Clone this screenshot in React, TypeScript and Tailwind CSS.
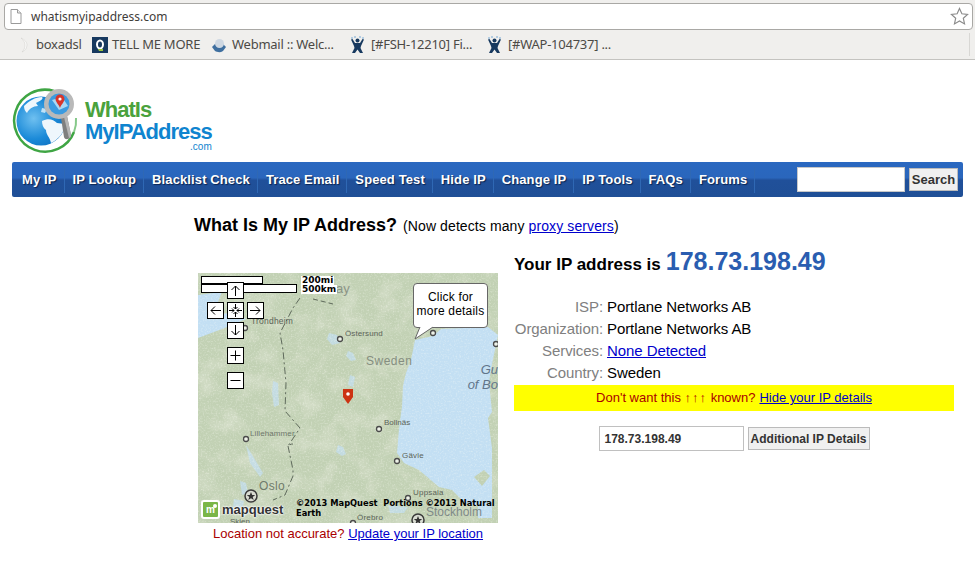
const navItems = ['My IP', 'IP Lookup', 'Blacklist Check', 'Trace Email', 'Speed Test', 'Hide IP', 'Change IP', 'IP Tools', 'FAQs', 'Forums']

const details = [
  { label: 'ISP:', value: 'Portlane Networks AB' },
  { label: 'Organization:', value: 'Portlane Networks AB' },
  { label: 'Services:', value: 'None Detected', link: true },
  { label: 'Country:', value: 'Sweden' },
]

const arial = { fontFamily: '"Liberation Sans", Arial, sans-serif' }
const noto = { fontFamily: '"Noto Sans", "Open Sans", sans-serif' }
const dejavu = { fontFamily: '"DejaVu Sans", sans-serif' }

function PageIcon() {
  return (
    <svg width="12" height="15" viewBox="0 0 12 15">
      <path d="M1 .5h6.5L11 4v10.5H1z" fill="#fff" stroke="#9a9a9a" />
      <path d="M7.5.5V4H11" fill="#eee" stroke="#9a9a9a" />
    </svg>
  )
}

function StarIcon() {
  return (
    <svg width="19" height="19" viewBox="0 0 20 20">
      <path d="M10 1.5l2.5 5.6 6 .6-4.5 4.1 1.3 6L10 14.7l-5.300 3.100 1.300-6L1.500 7.700l6-.6z" fill="#fff" stroke="#8a8a8a" strokeWidth="1.2" />
    </svg>
  )
}

function JiraIcon() {
  return (
    <svg width="15" height="18" viewBox="0 0 15 18">
      <g fill="#9fc0dc">
        <circle cx="2" cy="2" r="1" />
        <circle cx="5" cy="1" r="1" />
        <circle cx="10" cy="1" r="1" />
        <circle cx="13" cy="2" r="1" />
      </g>
      <circle cx="7.5" cy="4.5" r="2" fill="#17395f" />
      <path d="M1 3.500l1.500-.5L5 7h5l2.500-4 1.500.5L11 10l-.5 2 2.500 5h-3L7.500 13.500 5 17H2l2.500-5L4 10z" fill="#17395f" />
    </svg>
  )
}

function BookmarkItem({ width, gap, icon, label }: { width: string; gap: string; icon: React.ReactNode; label: string }) {
  return (
    <span className={`flex items-center whitespace-nowrap ${width}`}>
      <span className={`flex ${gap}`}>{icon}</span>
      <span>{label}</span>
    </span>
  )
}

function Bookmarks() {
  return (
    <div className="flex h-[29px] items-center pl-[15px] text-[13px] tracking-[-0.25px] text-[#4c4a46]" style={noto}>
      <BookmarkItem
        width="w-[77px]"
        gap="mr-[5px]"
        label="boxadsl"
        icon={
          <svg width="16" height="16" viewBox="0 0 16 16">
            <path d="M6 1c2 2 4 4 4 7s-1 5-3 7c3-1 5-4 5-7s-3-6-6-7z" fill="#fbfbfa" stroke="#cfcdc9" strokeWidth=".5" />
          </svg>
        }
      />
      <BookmarkItem
        width="w-[119px]"
        gap="mr-[4px]"
        label="TELL ME MORE"
        icon={
          <svg width="16" height="16" viewBox="0 0 16 16">
            <rect width="16" height="16" fill="#17395f" />
            <ellipse cx="8" cy="7.5" rx="3" ry="4" fill="none" stroke="#fff" strokeWidth="2" />
            <path d="M6 12h5v2H7z" fill="#9cc53d" />
          </svg>
        }
      />
      <BookmarkItem
        width="w-[139px]"
        gap="mr-[5px]"
        label="Webmail :: Welc..."
        icon={
          <svg width="16" height="16" viewBox="0 0 16 16">
            <path d="M8 3l7 7-3 4c-3 2-6 1-8 0L1 10z" fill="#3f6f9f" />
            <circle cx="8.5" cy="6.5" r="4.5" fill="#cfd8e2" />
          </svg>
        }
      />
      <BookmarkItem width="w-[137px]" gap="mr-[6px]" label="[#FSH-12210] Fi..." icon={<JiraIcon />} />
      <BookmarkItem width="w-[130px]" gap="mr-[6px]" label="[#WAP-104737] ..." icon={<JiraIcon />} />
    </div>
  )
}

function BrowserChrome() {
  return (
    <div className="h-[60px] border-b border-[#c4c3c0] bg-[#f0efed] pt-[3px]">
      <div className="ml-[4px] mr-[2px] flex h-[27px] items-center rounded-[4px] border border-[#a9a8a5] bg-white pl-[5px] pr-[3px]">
        <PageIcon />
        <span className="ml-[9px] flex-1 text-[12px] text-[#3f3d3a]" style={noto}>
          whatismyipaddress.com
        </span>
        <StarIcon />
      </div>
      <div className="flex">
        <div className="flex-1">
          <Bookmarks />
        </div>
        <div className="mr-[5px] mt-[3px] h-[23px] w-px bg-[#d8d7d4]" />
      </div>
    </div>
  )
}

function Logo() {
  return (
    <div className="flex h-[72px] items-start">
      <svg width="68" height="68" viewBox="0 0 68 68">
        <defs>
          <radialGradient id="globeFill" cx="35%" cy="45%" r="70%">
            <stop offset="0%" stopColor="#6fc0f0" />
            <stop offset="60%" stopColor="#1b8ad8" />
            <stop offset="100%" stopColor="#0e6fc0" />
          </radialGradient>
        </defs>
        <path d="M42 3A31 31 0 1 0 62 44" fill="none" stroke="#3fa544" strokeWidth="2.5" />
        <path d="M62 44A31 31 0 0 0 64 30" fill="none" stroke="#86c98a" strokeWidth="2" />
        <circle cx="29" cy="33" r="24.5" fill="url(#globeFill)" />
        <path d="M12 18c5-5 11-9 18-9 2 2-2 4-6 6l2 3c-5 0-9 3-11 7-2-2-3-4-3-7zM30 33c6-3 11-2 15 2l8 1c-1 9-6 15-14 19-1-6-5-8-5-13-3-2-4-6-4-9z" fill="#eef6fc" />
        <path d="M30 20l5 1-2 4-4-1z" fill="#bfe2f8" />
        <path d="M49 30l6-2 4 19c.5 4-6 6-7 2z" fill="#7f7f7f" />
        <path d="M52 29l3-1 4 19c.2 2-1 3-2 3z" fill="#b5b5b5" />
        <circle cx="47" cy="16" r="15" fill="#b9b9b9" />
        <circle cx="47" cy="16" r="10.5" fill="#3b9be0" />
        <path d="M40 12l10-3 6 9-9 4z" fill="#a9d8f4" />
        <path d="M43.5 11a4.5 4.5 0 0 1 9 0c0 3-3 5-4.5 9-1.500-4-4.500-6-4.500-9z" fill="#d8352a" />
        <circle cx="48" cy="11" r="1.6" fill="#fff" />
      </svg>
      <div className="ml-[5px] mt-[10px] font-bold tracking-[-1px]" style={arial}>
        <div className="text-[22px] leading-[23px] text-[#4aa23d]">WhatIs</div>
        <div className="text-[22px] leading-[22px] text-[#0f84cf]">MyIPAddress</div>
        <div className="-mt-[1px] text-right text-[10px] font-normal leading-[10px] tracking-normal text-[#0f84cf]">.com</div>
      </div>
    </div>
  )
}

function NavBar() {
  return (
    <div className="flex h-[35px] items-center rounded-[2px] bg-[linear-gradient(#2a68c0_0%,#2a66bc_45%,#20509a_52%,#1f4f96_100%)] pl-[2px] pr-[4px]">
      {navItems.map((item) => (
        <span
          key={item}
          className="border-r border-[#2f68b4] pl-[8px] pr-[7px] text-[13px] font-bold leading-[26px] tracking-[0.11px] text-white [text-shadow:1px_1px_1px_#0b2450]"
        >
          {item}
        </span>
      ))}
      <div className="ml-auto flex items-center gap-[4px] pr-px">
        <div className="h-[25px] w-[108px] border border-[#c8c8c8] bg-white" />
        <button className="h-[23px] w-[49px] border border-[#bbb] bg-[#f0f0f0] text-[13px] font-bold text-[#333]">Search</button>
      </div>
    </div>
  )
}

function ZoomControl({ d, className }: { d: string; className: string }) {
  return (
    <div className={`absolute h-[17px] w-[17px] border border-black bg-white ${className}`}>
      <svg width="15" height="15" viewBox="0 0 15 15" className="block">
        <path d={d} fill="none" stroke="#000" strokeWidth="1" />
      </svg>
    </div>
  )
}

function MapArt() {
  return (
    <svg width="300" height="250" viewBox="0 0 300 250" className="block">
      <defs>
        <filter id="speckle" x="0" y="0" width="100%" height="100%">
          <feTurbulence type="fractalNoise" baseFrequency="0.6" numOctaves="2" seed="7" />
          <feColorMatrix values="0 0 0 0 1  0 0 0 0 1  0 0 0 0 0.95  0 0 0 2 -0.95" />
        </filter>
        <filter id="patches" x="0" y="0" width="100%" height="100%">
          <feTurbulence type="fractalNoise" baseFrequency="0.05" numOctaves="3" seed="12" />
          <feColorMatrix values="0 0 0 0 0.85  0 0 0 0 0.87  0 0 0 0 0.78  0 0 0 1.6 -0.7" />
        </filter>
      </defs>
      <rect width="300" height="250" fill="#c2d1b4" />
      <rect width="300" height="250" filter="url(#patches)" opacity=".55" />
      {/* Norwegian sea */}
      <path d="M0 22l24-3-10 24 22-4 12 7-24 10L0 65z" fill="#c3dff3" />
      {/* Gulf of Bothnia */}
      <path d="M300 62l-10-8-47 2-8 7-18 4-4 20-5 13-3 13-1 20-3 23-2 24 7 10 15 7 20 17 13 3 13 13 13 3v12h14v-70l-4-30 4-6-3-30 3-18z" fill="#c3dff3" />
      <path d="M276 204l10-7 6 6-8 10z" fill="#c2d1b4" />
      {/* lakes */}
      <g fill="#c3dff3" opacity=".7">
        <path d="M131 60l8 2 3 8-8 2-5-6z" />
        <path d="M150 78l5 2 3 7-5 1-5-5z" />
        <path d="M152 102l5 2-2 10-5-2z" />
        <path d="M140 172l5 2 3 7-4 2-6-4z" />
        <path d="M75 108l5 2 1 22-5 2-2-14z" />
        <path d="M48 172l5 8 12 20-3 4-10-14z" />
        <path d="M42 208l6 2 2 10-6 2z" />
        <path d="M36 226l10 2-2 10-10 2z" />
        <path d="M190 232l20 2-4 6h-14z" />
      </g>
      <rect width="300" height="250" filter="url(#speckle)" opacity=".4" />
      {/* border */}
      <path d="M102 25L95 35 82 60l3 17 3 33-1 28 15 17-12 18c2-2 4-2 5-2m-5 2l5 24v6l-8 19-12 5" fill="none" stroke="#5f6a5c" strokeWidth="1" strokeDasharray="7 3 2 3" />
      <path d="M115 26l20 5" fill="none" stroke="#5f6a5c" strokeWidth="1" strokeDasharray="5 3" />
      <g fill="#eef2e8" stroke="#4a4a4a" strokeWidth="1.3">
        <circle cx="142" cy="66" r="2.5" />
        <circle cx="47" cy="55" r="2.5" />
        <circle cx="181" cy="156" r="2.5" />
        <circle cx="48" cy="166" r="2.5" />
        <circle cx="199" cy="188" r="2.5" />
        <circle cx="235" cy="60" r="2.5" />
        <circle cx="298" cy="71" r="2.5" />
        <circle cx="210" cy="225" r="2.5" />
        <circle cx="155" cy="250" r="2.5" />
      </g>
      <g fill="#d9dcd2" stroke="#3a3a3a" strokeWidth="1.5">
        <circle cx="53" cy="223" r="6" />
        <circle cx="220" cy="247" r="6" />
      </g>
      <path d="M53 219l1.200 3h3l-2.500 2 1 3-2.700-1.800-2.700 1.800 1-3-2.500-2h3zM220 243l1.200 3h3l-2.500 2 1 3-2.700-1.800-2.700 1.800 1-3-2.500-2h3z" fill="#333" />
      <path d="M145 116h10v8l-5 7-5-7z" fill="#cc3312" />
      <circle cx="150" cy="121" r="1.8" fill="#fff" />
    </svg>
  )
}

function LandscapeMap() {
  return (
    <div className="relative h-[250px] w-[300px] overflow-hidden whitespace-nowrap" style={arial}>
      <MapArt />
      <span className="absolute left-[138px] top-[8px] text-[13px] leading-[15px] text-[#8b9486]">ay</span>
      <span className="absolute left-[53px] top-[42px] text-[8.5px] tracking-[0.2px] text-[#5b6358]">Trondheim</span>
      <span className="absolute left-[147px] top-[55px] text-[8px] tracking-[0.1px] text-[#5b6358]">Östersund</span>
      <span className="absolute left-[168px] top-[79px] text-[12px] tracking-[0.5px] text-[#858e80]">Sweden</span>
      <span className="absolute right-0 top-[89px] text-[13px] italic leading-[15px] text-[#61758a]">Gu</span>
      <span className="absolute right-0 top-[104px] text-[13px] italic leading-[15px] text-[#61758a]">of Bo</span>
      <span className="absolute left-[186px] top-[144px] text-[8px] text-[#5b6358]">Bollnäs</span>
      <span className="absolute left-[52px] top-[155px] text-[8px] tracking-[0.1px] text-[#6f776b]">Lillehammer</span>
      <span className="absolute left-[204px] top-[177px] text-[8px] tracking-[0.2px] text-[#5b6358]">Gävle</span>
      <span className="absolute left-[61px] top-[204px] text-[12px] tracking-[0.3px] text-[#6f7a6a]">Oslo</span>
      <span className="absolute left-[215px] top-[214px] text-[8px] tracking-[0.2px] text-[#5b6358]">Uppsala</span>
      <span className="absolute left-[228px] top-[230px] text-[12px] text-[#7f8a88]">Stockholm</span>
      <span className="absolute left-[159px] top-[239px] text-[8px] tracking-[0.2px] text-[#5b6358]">Örebro</span>
      <span className="absolute left-[32px] top-[243px] text-[8px] text-[#5b6358]">Skien</span>

      {/* scale bars */}
      <div className="absolute left-[3px] top-[3px] h-[8px] w-[62px] border border-black bg-white" />
      <div className="absolute left-[3px] top-[11px] h-[9px] w-[96px] border border-black bg-white" />
      <span className="absolute left-[103px] top-[3px] bg-white px-px text-[9px] font-bold leading-[9px] text-black" style={dejavu}>200mi</span>
      <span className="absolute left-[103px] top-[12px] bg-white px-px text-[9px] font-bold leading-[9px] text-black" style={dejavu}>500km</span>

      {/* pan and zoom */}
      <ZoomControl className="left-[29px] top-[9px]" d="M7.5 13V3M3.5 7l4-4 4 4" />
      <ZoomControl className="left-[9px] top-[29px]" d="M13 7.5H3M7 3.5l-4 4 4 4" />
      <ZoomControl className="left-[29px] top-[29px]" d="M7.5 1v5M5.5 4l2 2 2-2M7.5 14V9M5.5 11l2-2 2 2M1 7.5h5M4 5.5l2 2-2 2M14 7.5H9M11 5.5l-2 2 2 2" />
      <ZoomControl className="left-[49px] top-[29px]" d="M2 7.5h10M8 3.5l4 4-4 4" />
      <ZoomControl className="left-[29px] top-[49px]" d="M7.5 2v10M3.5 8l4 4 4-4" />
      <ZoomControl className="left-[29px] top-[74px]" d="M7.5 2.5v10M2.5 7.5h10" />
      <ZoomControl className="left-[29px] top-[99px]" d="M2.5 7.5h10" />

      {/* callout */}
      <div className="absolute left-[215px] top-[10px] h-[45px] w-[75px] rounded-[4px] border border-[#666] bg-white text-center text-[12px] leading-[14px] tracking-[0.2px] text-black">
        <div className="pt-[6px]">Click for</div>
        <div>more details</div>
      </div>
      <svg width="20" height="14" viewBox="0 0 20 14" className="absolute left-[216px] top-[53px]">
        <path d="M6 1L1 13 19 1" fill="#fff" stroke="#666" />
        <path d="M6.5 0h12v1H6.5z" fill="#fff" />
      </svg>

      {/* mapquest */}
      <div className="absolute bottom-[4px] left-[3px] flex items-center">
        <span className="relative flex h-[19px] w-[19px] items-center justify-center rounded-[3px] border-2 border-white bg-[#7ab648] text-[10px] font-bold leading-none text-white">
          m
          <span className="absolute right-[1px] top-[2px] h-[4px] w-[4px] rounded-full bg-white" />
        </span>
        <span className="ml-[2px] text-[13px] font-bold leading-[14px] text-[#333] [text-shadow:0_0_2px_#fff,0_0_2px_#fff,0_0_2px_#fff]">mapquest</span>
      </div>
      <div className="absolute left-[98px] top-[225px] text-[8.3px] font-bold leading-[10px] text-black" style={dejavu}>
        ©2013 MapQuest&nbsp; Portions ©2013 Natural
        <br />
        Earth
      </div>
    </div>
  )
}

function IpPanel() {
  return (
    <div className="w-[440px]">
      <div className="flex h-[32px] items-baseline font-bold">
        <span className="text-[17px] text-black">Your IP address is</span>
        <span className="ml-[5px] text-[25px] text-[#2a5db0]">178.73.198.49</span>
      </div>
      <div className="mt-[21px]">
        {details.map((row) => (
          <div key={row.label} className="flex h-[22px] items-center text-[15px] tracking-[-0.08px]">
            <span className="w-[89px] text-right text-[#808080]">{row.label}</span>
            <span className={row.link ? 'ml-[4px] text-[#0000cc] underline' : 'ml-[4px] text-black'}>{row.value}</span>
          </div>
        ))}
      </div>
      <div className="mt-[1px] flex h-[26px] items-center justify-center bg-[#ffff00] text-[13px] text-[#aa0000]">
        <span>
          Don't want this <span className="tracking-[1px]">↑↑↑</span> known?
        </span>
        <span className="ml-[4px] text-[#0000cc] underline">Hide your IP details</span>
      </div>
      <div className="mt-[15px] flex items-center justify-center gap-[4px]">
        <div className="flex h-[25px] w-[145px] items-center border border-[#c0c0c0] pl-[5px] text-[12px] font-bold text-[#333]">178.73.198.49</div>
        <button className="h-[23px] w-[122px] border border-[#bbb] bg-[#f0f0f0] text-[12px] font-bold text-[#333]">Additional IP Details</button>
      </div>
    </div>
  )
}

export default function App() {
  return (
    <div className="h-[567px] w-[975px] overflow-hidden bg-white" style={arial}>
      <BrowserChrome />
      <div className="px-[12px] pt-[28px]">
        <Logo />
        <div className="mt-[2px]">
          <NavBar />
        </div>
      </div>
      <main className="pl-[194px] pt-[15px]">
        <div className="flex h-[24px] items-baseline text-black">
          <h1 className="text-[18px] font-bold">What Is My IP Address?</h1>
          <p className="ml-[6px] text-[14px] tracking-[0.1px]">
            (Now detects many <span className="text-[#0000cc] underline">proxy servers</span>)
          </p>
        </div>
        <div className="mt-[37px] flex pl-[4px]">
          <div className="w-[300px]">
            <LandscapeMap />
            <p className="mt-px text-center text-[13px] text-[#aa0000]">
              Location not accurate? <span className="text-[#0000cc] underline">Update your IP location</span>
            </p>
          </div>
          <div className="ml-[16px] -mt-[30px]">
            <IpPanel />
          </div>
        </div>
      </main>
    </div>
  )
}
